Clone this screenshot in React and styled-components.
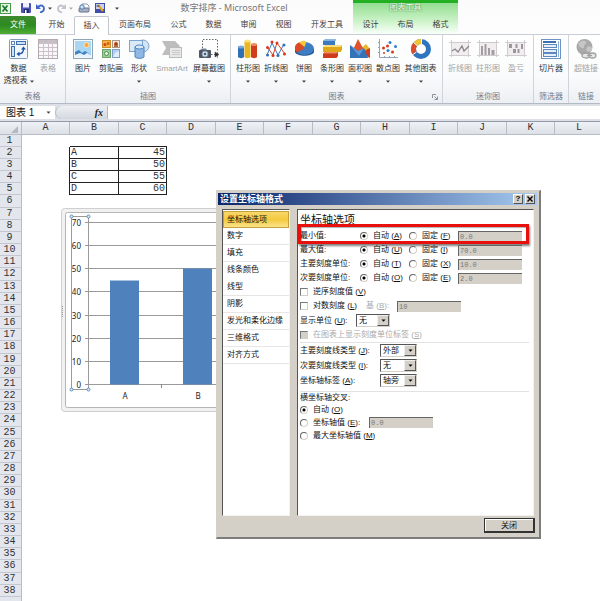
import React from 'react';

import styled, { createGlobalStyle, css } from 'styled-components';

const GlobalStyle = createGlobalStyle`
    * {
        box-sizing: border-box;
    }
    body {
        margin: 0;
        background-color: #fff;
        font-family: 'Liberation Sans', 'Noto Sans CJK SC', sans-serif;
        font-size: 8px;
        line-height: 12px;
        color: #333;
    }
    button, input, select {
        font-family: inherit;
        font-size: inherit;
        line-height: inherit;
        color: inherit;
        margin: 0;
        padding: 0;
    }
    svg {
        display: block;
        flex: none;
    }
`;

const Workbook = styled.div`
    position: relative;
    display: flex;
    flex-direction: column;
    height: 100vh;
    overflow: hidden;
`;

/* Title bar and tabs */

const Header = styled.header`
    display: grid;
    grid-template-columns: 353px auto 1fr;
    grid-template-rows: 16px 18px;
    background: linear-gradient(#fbfbfc, #fdfdfe);
    border-bottom: 1px solid #c9ced6;
    height: 35px;
`;

const TitleBar = styled.div`
    display: flex;
    align-items: center;
`;

const QuickAccess = styled.div`
    display: flex;
    align-items: center;
    gap: 5px;
    width: 115px;
`;

const QuickButton = styled.button`
    display: flex;
    align-items: center;
    gap: 3px;
    border: 0;
    background: none;
`;

const QuickDivider = styled.span`
    width: 1px;
    height: 10px;
    background-color: #a9afb8;
`;

const Title = styled.h1`
    flex: 1;
    margin: 0;
    font-size: 9px;
    font-weight: 400;
    text-align: center;
    color: #777;
    white-space: nowrap;
    font-family: 'Noto Sans', 'Noto Sans CJK SC', sans-serif;
`;

const Tabs = styled.nav`
    display: flex;
    height: 18px;
`;

const MainTabs = styled(Tabs)`
    grid-row: 2;
    grid-column: 1;
`;

const Tab = styled.button`
    width: ${(props) => (props.$wide ? 52 : 35)}px;
    height: 18px;
    border: 0;
    background: none;
    color: #3c3c3c;
    white-space: nowrap;
    ${(props) =>
        props.$active &&
        css`
            height: 19px;
            background-color: #fff;
            border: 1px solid #c3c8d0;
            border-bottom: 0;
            border-radius: 2px 2px 0 0;
        `}
`;

const FileTab = styled(Tab)`
    width: 36px;
    margin-right: 3px;
    color: #fff;
    border-radius: 0 3px 0 0;
    background: linear-gradient(#3d8a2e, #2c8a20 50%, #4fae35);
`;

const ContextTools = styled.div`
    grid-row: 1 / 3;
    grid-column: 2;
    border-top: 3px solid #22b022;
    background: linear-gradient(#93dd91, #c9f2c6 55%, #fafffa);
`;

const ContextLabel = styled.div`
    height: 13px;
    line-height: 9px;
    text-align: center;
    color: #fff;
    text-shadow: 0 0 1px #2f7f2f, 0 0 2px #3f9f3f;
`;

/* Ribbon */

const Ribbon = styled.div`
    display: flex;
    height: 69px;
    background: linear-gradient(#fff, #fafbfc 60%, #eceff3);
    border-bottom: 1px solid #b4bac4;
`;

const Group = styled.section`
    display: flex;
    flex-direction: column;
    justify-content: space-between;
    padding: 3px 3px 0;
    border-right: 1px solid #d0d4da;
    &:last-child {
        border-right: 0;
    }
`;

const GroupButtons = styled.div`
    display: flex;
`;

const GroupFooter = styled.div`
    position: relative;
    text-align: center;
    color: #747c8c;
`;

const Launcher = styled.button`
    position: absolute;
    right: 1px;
    bottom: 3px;
    border: 0;
    background: none;
`;

const Tool = styled.button`
    display: flex;
    flex-direction: column;
    align-items: center;
    width: ${(props) => props.$width || 28}px;
    border: 0;
    background: none;
    white-space: nowrap;
    color: ${(props) => (props.disabled ? '#a3a3a3' : '#333')};
    & svg.picture {
        margin-bottom: 3px;
    }
`;

const ToolCaret = styled.span`
    display: flex;
    align-items: center;
    gap: 2px;
    height: 12px;
`;

/* Formula bar */

const FormulaBar = styled.div`
    display: flex;
    height: 18px;
    padding: 2px 0;
    background-color: #dde1e7;
    border-bottom: 1px solid #949ba6;
`;

const NameBox = styled.label`
    display: flex;
    align-items: center;
    width: 55px;
    padding: 0 4px 0 6px;
    background-color: #fff;
    color: #111;
    & input {
        flex: 1;
        min-width: 0;
        border: 0;
        font-size: 10px;
        background: none;
    }
`;

const FunctionBar = styled.div`
    display: flex;
    align-items: center;
    justify-content: flex-end;
    width: 52px;
    padding-right: 4px;
    border-left: 1px solid #b4bac4;
    border-radius: 7px 0 0 7px;
    background: linear-gradient(#eef0f3, #d3d8e0);
    font: italic bold 10px 'Liberation Serif', serif;
    color: #222;
`;

const FormulaInput = styled.input`
    flex: 1;
    min-width: 0;
    border: 0;
    border-left: 1px solid #b4bac4;
    background-color: #fff;
`;

/* Sheet */

const Sheet = styled.main`
    position: relative;
    flex: 1;
    overflow: hidden;
`;

const Grid = styled.table`
    table-layout: fixed;
    width: 604px;
    min-width: 100%;
    border-collapse: separate;
    border-spacing: 0;
    font-family: 'Liberation Mono', 'Noto Sans CJK SC', monospace;
    font-size: 10px;
    line-height: 10px;
    color: #333;
    & tbody tr {
        height: 12px;
    }
    & tbody tr:nth-child(6n) {
        height: 13px;
    }
`;

const Col = styled.col`
    width: ${(props) => props.$width}px;
`;

const HeadCell = styled.th`
    height: 13px;
    padding: 0;
    font-weight: 400;
    background: linear-gradient(#eef1f5, #dde1e7);
    border-right: 1px solid #b7bdc7;
    border-bottom: 1px solid #b7bdc7;
`;

const RowCell = styled.th`
    padding: 0 2px 0 0;
    font-weight: 400;
    background-color: #e3e7ed;
    border-right: 1px solid #b7bdc7;
    border-bottom: 1px solid #c2c7d0;
`;

const Corner = styled(HeadCell)`
    & svg {
        margin: 2px 3px 0 auto;
    }
`;

const Cell = styled.td`
    padding: 0 1px;
    text-align: ${(props) => (props.$number ? 'right' : 'left')};
    border-right: ${(props) => (props.$right ? '1px solid #222' : '0')};
    border-bottom: ${(props) => (props.$bottom ? '1px solid #222' : '0')};
`;

const ChartObject = styled.figure`
    position: absolute;
    left: 61px;
    top: 86px;
    margin: 0;
`;

/* Dialog */

const Dialog = styled.div`
    position: absolute;
    left: 216px;
    top: 190px;
    width: 325px;
    padding: 2px 2px 4px 1px;
    background-color: #d4d0c8;
    border: 1px solid #d4d0c8;
    border-right: 2px solid #7c7c7c;
    border-bottom: 2px solid #7c7c7c;
    color: #111;
`;

const DialogTitle = styled.div`
    display: flex;
    align-items: center;
    gap: 2px;
    height: 12px;
    padding: 0 2px;
    background: linear-gradient(90deg, #0a246a, #a6caf0);
    & h2 {
        flex: 1;
        margin: 0;
        font-size: 9px;
        font-weight: 700;
        line-height: 12px;
        color: #fff;
    }
`;

const TitleButton = styled.button`
    display: flex;
    align-items: center;
    justify-content: center;
    width: 10px;
    height: 10px;
    border: 1px solid #fff;
    border-right-color: #555;
    border-bottom-color: #555;
    background-color: #d4d0c8;
    font-size: 8px;
    font-weight: 700;
    line-height: 8px;
    color: #000;
`;

const DialogBody = styled.div`
    display: flex;
    gap: 7px;
    padding: 4px 3px 2px 4px;
    min-height: 313px;
`;

const Pane = styled.div`
    background-color: #fff;
    border: 1px solid #f4f2ee;
    border-top-color: #555;
    border-left-color: #555;
`;

const PageList = styled(Pane)`
    width: 68px;
    padding-top: 1px;
`;

const PageButton = styled.button`
    display: block;
    width: 100%;
    height: 17px;
    padding-left: 4px;
    border: 0;
    border-bottom: 1px solid ${(props) => (props.$plain ? '#fff' : '#e6e6e6')};
    background: none;
    text-align: left;
    white-space: nowrap;
    ${(props) =>
        props.$active &&
        css`
            border: 1px solid #c5a13c;
            padding-left: 3px;
            background: linear-gradient(#f8d869, #f5c93f 50%, #fbe389);
        `}
`;

const Options = styled(Pane)`
    flex: 1;
    padding: 0 4px 0 2px;
    & h3 {
        margin: 0;
        height: 19px;
        font-size: 11px;
        font-weight: 400;
        line-height: 20px;
    }
`;

const Row = styled.div`
    position: relative;
    display: flex;
    align-items: center;
    height: ${(props) => props.$height || 14}px;
    white-space: nowrap;
`;

const AxisRow = styled(Row)`
    display: grid;
    grid-template-columns: 60px 49px 49px 64px;
`;

const Highlight = styled.span`
    position: absolute;
    inset: -5px 0 -1px -2px;
    border: 3px solid #e8100c;
    box-shadow: 1px 2px 2px rgba(0, 0, 0, 0.5), inset 1px 1px 1px rgba(0, 0, 0, 0.3);
    pointer-events: none;
`;

const Choice = styled.label`
    display: flex;
    align-items: center;
    gap: 5px;
    color: ${(props) => (props.$disabled ? '#aaa' : 'inherit')};
`;

const Radio = styled.input.attrs({ type: 'radio' })`
    appearance: none;
    width: 8px;
    height: 8px;
    border: 1px solid #666;
    border-right-color: #d4d0c8;
    border-bottom-color: #d4d0c8;
    border-radius: 50%;
    background-color: #fff;
    &:checked {
        background-image: radial-gradient(circle, #000 1px, transparent 2px);
    }
`;

const Checkbox = styled.input.attrs({ type: 'checkbox' })`
    appearance: none;
    width: 8px;
    height: 8px;
    border: 1px solid #777;
    border-right-color: #d4d0c8;
    border-bottom-color: #d4d0c8;
    background-color: ${(props) => (props.disabled ? '#d4d0c8' : '#fff')};
`;

const Field = styled.input`
    width: 64px;
    height: 11px;
    padding-left: 1px;
    border: 0;
    border-top: 1px solid #666;
    border-left: 1px solid #666;
    background-color: #d4d0c8;
    font-family: 'Liberation Mono', monospace;
    font-size: 7px;
    line-height: 10px;
    color: #777;
`;

const FieldLabel = styled.label`
    color: ${(props) => (props.$disabled ? '#aaa' : 'inherit')};
    width: ${(props) => (props.$width ? `${props.$width}px` : 'auto')};
    margin-left: ${(props) => props.$indent || 0}px;
`;

const SelectBox = styled.span`
    display: flex;
    position: relative;
    width: ${(props) => props.$width}px;
    height: 13px;
    border: 1px solid #555;
    border-right-color: #d4d0c8;
    border-bottom-color: #d4d0c8;
    & select {
        appearance: none;
        width: 100%;
        padding-left: 2px;
        border: 0;
        background-color: #fff;
        line-height: 11px;
    }
`;

const SelectArrow = styled.span`
    position: absolute;
    right: 0;
    top: 0;
    bottom: 0;
    display: flex;
    align-items: center;
    justify-content: center;
    width: 12px;
    border: 1px solid #eee;
    border-right-color: #555;
    border-bottom-color: #555;
    background-color: #d4d0c8;
    pointer-events: none;
`;

const Rule = styled.hr`
    width: 100%;
    height: 1px;
    margin: ${(props) => (props.$spaced ? '3px 0 0' : '0')};
    border: 0;
    background-color: #e2e2e2;
`;

const DialogFooter = styled.div`
    display: flex;
    justify-content: flex-end;
    padding-right: 2px;
`;

const CloseButton = styled.button`
    width: 51px;
    height: 15px;
    border: 1px solid #333;
    border-right-width: 2px;
    border-bottom-width: 2px;
    background-color: #d4d0c8;
    box-shadow: inset 1px 1px 0 #fff;
    line-height: 11px;
`;

/* Drawings */

const Caret = ({ color = '#444', size = 4 }) => (
    <svg width={size} height='3' viewBox='0 0 4 3'>
        <path d='M0 0.500h4L2 2.800z' fill={color} />
    </svg>
);

const Picture = ({ children }) => (
    <svg className='picture' width='22' height='22' viewBox='0 0 22 22'>
        {children}
    </svg>
);

const PivotIcon = () => (
    <Picture>
        <rect x='1.500' y='1.500' width='18' height='19' rx='1' fill='#f2f7fc' stroke='#7f9cbd' />
        <rect x='3.500' y='3.500' width='3' height='3' fill='#fff' stroke='#5d86b8' />
        <rect x='8.500' y='3.500' width='9' height='3' fill='#cfe0f2' stroke='#3f70ad' />
        <rect x='3.500' y='8.500' width='3' height='10' fill='#cfe0f2' stroke='#3f70ad' />
        <path d='M10.500 16c3 0 5-1.500 5-5.500' fill='none' stroke='#1f56a5' strokeWidth='1.400' />
        <path d='M13 11.500l2.500-3 2.500 3zM11.500 13.500l-3 2.500 3 2.500z' fill='#1f56a5' />
    </Picture>
);

const TableIcon = () => (
    <Picture>
        <rect x='1.500' y='1.500' width='19' height='19' fill='#faf7f9' stroke='#b3aab0' />
        <path d='M2 2h18v3H2z' fill='#c6bec4' />
        <path d='M2 5.500h18M2 9.500h18M2 13.500h18M2 17.500h18M6.500 2v18M11.500 2v18M15.500 2v18' stroke='#cbc3c9' />
    </Picture>
);

const PhotoIcon = () => (
    <Picture>
        <rect x='1.500' y='1.500' width='19' height='19' fill='#f4f8f9' stroke='#8fa6b4' />
        <rect x='3' y='3' width='16' height='16' fill='#a9d6f3' />
        <circle cx='14.500' cy='7' r='2.500' fill='#f3a84c' stroke='#fbe3b6' />
        <path d='M3 14l4-2 3 3 3-2 6 4v2H3z' fill='#3d83c4' />
        <path d='M3 17l5-2 4 2 3-2 4 2v2H3z' fill='#e6f2fb' />
    </Picture>
);

const ClipArtIcon = () => (
    <Picture>
        <rect x='2.500' y='2.500' width='8' height='7' fill='#f4b642' stroke='#ce8a28' />
        <circle cx='5' cy='6.500' r='1.500' fill='#d23f1c' />
        <path d='M7 4h2.500v3H7z' fill='#e2651f' />
        <rect x='12.500' y='2.500' width='7' height='7' fill='#f3ebe0' stroke='#a99a8b' />
        <path d='M14 9V5l2-1.500L18 5v4z' fill='#c6682e' />
        <circle cx='16' cy='6' r='1' fill='#6b3a22' />
        <rect x='2.500' y='11.500' width='8' height='8' fill='#9bcc97' stroke='#6ea36a' />
        <circle cx='6.500' cy='15.500' r='2' fill='#e7f3c8' stroke='#488f67' />
        <rect x='12.500' y='11.500' width='7' height='8' fill='#b4d0f0' stroke='#7d9fcb' />
        <path d='M13 19l2-4 4-2v6z' fill='#e1edfa' />
    </Picture>
);

const ShapesIcon = () => (
    <Picture>
        <circle cx='15' cy='8' r='6' fill='#d3e4f4' stroke='#7aa3cd' />
        <rect x='1.500' y='2.500' width='13' height='11' fill='#dceaf8' stroke='#7aa3cd' />
        <path d='M7 9v10c1.500 1.800 7.500 1.800 9 0V9z' fill='#8fb9e4' stroke='#4c84bf' />
        <ellipse cx='11.500' cy='9' rx='4.500' ry='2' fill='#d8e8f8' stroke='#4c84bf' />
    </Picture>
);

const SmartArtIcon = () => (
    <Picture>
        <path d='M1 3h13l5 5-2 3H9v6H1l4-7z' fill='#bdbdbd' />
        <rect x='8.500' y='9.500' width='12' height='10' fill='#e8e8e8' stroke='#bbb' />
        <path d='M11 12.500h8M11 14.500h8M11 16.500h8' stroke='#c9c9c9' />
    </Picture>
);

const ScreenshotIcon = () => (
    <Picture>
        <path d='M4.500 10V1.500h15v12M13 16.500h4' fill='none' stroke='#666' strokeDasharray='1.500 1.500' />
        <path d='M17 14l4 2.500-4 2.500zM19.500 14v6' stroke='#333' fill='#333' strokeWidth='0.500' />
        <rect x='1' y='12' width='12' height='8' rx='1' fill='#4d5660' />
        <path d='M2 12l2-1.500h4L9 12z' fill='#7a8490' />
        <circle cx='7' cy='16' r='3' fill='#d9e5f0' stroke='#8797a8' />
        <circle cx='7' cy='16' r='1.300' fill='#41607f' />
    </Picture>
);

const ColumnIcon = () => (
    <Picture>
        <path d='M1 9v10c1 1.500 5 1.500 6 0V9z' fill='#2f6fb5' />
        <ellipse cx='4' cy='9' rx='3' ry='1.500' fill='#77a8dc' />
        <path d='M7.500 3v16c1 1.500 5 1.500 6 0V3z' fill='#e9b521' />
        <ellipse cx='10.500' cy='3' rx='3' ry='1.500' fill='#fbe07c' />
        <path d='M14 6.500V19c1 1.500 5 1.500 6 0V6.500z' fill='#cf3d1c' />
        <ellipse cx='17' cy='6.500' rx='3' ry='1.500' fill='#f08862' />
    </Picture>
);

const LineIcon = () => (
    <Picture>
        <path d='M2 17L7 5l6 12 6-11' fill='none' stroke='#3978bd' />
        <path d='M2 9l6 8L12 5l8 11' fill='none' stroke='#d9482c' />
        <g fill='#2f6fb5'>
            <circle cx='2.500' cy='17' r='1.500' />
            <circle cx='13' cy='17.500' r='1.500' />
            <circle cx='19' cy='7' r='1.500' />
        </g>
        <g fill='#d9381c'>
            <circle cx='2.500' cy='9.500' r='1.500' />
            <circle cx='7' cy='4' r='1.500' />
            <circle cx='12' cy='5' r='1.500' />
            <circle cx='8' cy='17.500' r='1.500' />
            <circle cx='19.500' cy='16' r='1.500' />
        </g>
    </Picture>
);

const PieIcon = () => (
    <Picture>
        <path d='M2 11v3c2 5 17 5 19 0v-3z' fill='#1f5795' />
        <ellipse cx='11.500' cy='10.500' rx='9.500' ry='6.500' fill='#3c7dc4' />
        <path d='M11.500 10.500L4 14.500C-1 9 4 4 8 4z' fill='#db4a25' />
        <path d='M11.500 9L6 4.500c3-2 6-2 7.500-1z' fill='#f3c93b' />
    </Picture>
);

const BarIcon = () => (
    <Picture>
        <path d='M2 3l2-1.500h11L14 3v4H2z' fill='#3a78c0' />
        <path d='M2 3l2-1.500h11L14 3z' fill='#7fb0e2' />
        <path d='M2 9l2-1.500h17V12l-1.500 2H2z' fill='#e0a819' />
        <path d='M2 9l2-1.500h17L19.500 9z' fill='#fbe07c' />
        <path d='M2 15.500L4 14h13v4l-1.500 2H2z' fill='#cd3b1b' />
        <path d='M2 15.500L4 14h13l-1.500 1.500z' fill='#f08862' />
    </Picture>
);

const AreaIcon = () => (
    <Picture>
        <path d='M10 12l7-6 4 5v7H9z' fill='#eab826' />
        <path d='M3 14L9 1l6 11-4 4z' fill='#e0522b' />
        <path d='M15 13l6-3v10l-4-2z' fill='#cf3d1c' />
        <path d='M1 7l8 6 6-3 4 10H1z' fill='#3472b8' />
        <path d='M1 7l8 6 6-3-5 8z' fill='#5b95d5' />
    </Picture>
);

const ScatterIcon = () => (
    <Picture>
        <path d='M2.500 1v18.500H21M1 4.500h2M1 9.500h2M1 14.500h2M7.500 18v2M12.500 18v2M17.500 18v2' fill='none' stroke='#8fa3ba' />
        <g fill='#d9381c'>
            <circle cx='6.500' cy='10' r='1.500' />
            <circle cx='10.500' cy='8' r='1.500' />
            <circle cx='15.500' cy='14' r='1.500' />
            <circle cx='7' cy='15' r='1' />
        </g>
        <g fill='#2f7fd0'>
            <circle cx='13' cy='4.500' r='1.500' />
            <circle cx='18.500' cy='8.500' r='1.500' />
            <circle cx='11' cy='12.500' r='1.500' />
        </g>
    </Picture>
);

const DonutIcon = () => (
    <Picture>
        <circle cx='11' cy='11' r='7.500' fill='none' stroke='#2f74be' strokeWidth='5' />
        <path d='M4.500 14.700A7.500 7.500 0 0 1 5.500 6' fill='none' stroke='#dc4c2a' strokeWidth='5' />
        <path d='M5.500 6A7.500 7.500 0 0 1 11.500 3.500' fill='none' stroke='#f1c232' strokeWidth='5' />
        <path d='M3 16.500l3.500-2.500M3.500 4.500l4 3.500M11.500 1v5' stroke='#fff' />
    </Picture>
);

const SparkFrame = ({ children }) => (
    <Picture>
        <rect x='2' y='4' width='18' height='13' fill='#f1eef0' />
        <path d='M0 4.500h22M0 17.500h22M2.500 2v17M19.500 2v17' stroke='#d0c9ce' />
        {children}
    </Picture>
);

const SparkLineIcon = () => (
    <SparkFrame>
        <path d='M3 13l3-2 3 3 4-6 2 5 5-5' fill='none' stroke='#8d858b' strokeWidth='1.300' />
    </SparkFrame>
);

const SparkColumnIcon = () => (
    <SparkFrame>
        <path d='M4 8h2v9H4zM7.500 6h2v11h-2zM11 10h2v7h-2zM14.500 12h3v5h-3z' fill='#a59da3' />
    </SparkFrame>
);

const WinLossIcon = () => (
    <SparkFrame>
        <path d='M4 6h3v4H4zM8 11h3v4H8zM10.500 6h2v4h-2zM12.500 11h2v4h-2zM16 6h2v5h-2z' fill='#9d959b' />
    </SparkFrame>
);

const SlicerIcon = () => (
    <Picture>
        <rect x='1.500' y='1.500' width='19' height='19' fill='#fff' stroke='#6d93c4' />
        <path d='M3 4h13' stroke='#3d70b2' strokeWidth='2' />
        <path d='M18.500 3v16' stroke='#8fb0d8' />
        <g fill='#e6effa' stroke='#5c88be'>
            <rect x='3.500' y='6.500' width='13' height='3' />
            <rect x='3.500' y='11.500' width='13' height='3' />
            <rect x='3.500' y='15.500' width='13' height='3' />
        </g>
    </Picture>
);

const LinkIcon = () => (
    <Picture>
        <circle cx='9.500' cy='9' r='8' fill='#a9a9a9' />
        <path d='M3 6c3-4 7-4 8-2s-2 2-2 5-4 1-6-3zM12 9c3-2 5 0 5 2s-3 4-5 2 0-2 0-4z' fill='#c6c6c6' />
        <g fill='none' stroke='#a0a0a0' strokeWidth='1.300'>
            <ellipse cx='11' cy='17.500' rx='4' ry='2.500' fill='#e6e6e6' />
            <ellipse cx='17.500' cy='17.500' rx='3.500' ry='2.500' fill='#e6e6e6' />
            <path d='M12 17.500h5' />
        </g>
    </Picture>
);

const ExcelLogo = () => (
    <svg width='11' height='11' viewBox='0 0 11 11'>
        <rect x='0.500' y='0.500' width='10' height='10' fill='#e9f4e8' stroke='#4b9b4d' />
        <path d='M2.500 2.500l5 6M7.500 2.500l-5 6' stroke='#1d7a2d' strokeWidth='1.800' />
    </svg>
);

const SaveIcon = () => (
    <svg width='10' height='10' viewBox='0 0 10 10'>
        <rect width='10' height='10' rx='1' fill='#4a53b5' />
        <path d='M2 0h6v4.500H2z' fill='#eef0fb' />
        <path d='M3 6h5v4H3z' fill='#252c74' />
        <path d='M4 7h1.500v3H4z' fill='#fff' />
    </svg>
);

const UndoIcon = ({ color, flip }) => (
    <svg width='9' height='10' viewBox='0 0 9 10'>
        <g transform={flip ? 'translate(9 0) scale(-1 1)' : undefined}>
            <path d='M2 4c3-3 6-1 6 1.500S6 9 4 9.500' fill='none' stroke={color} strokeWidth='1.800' />
            <path d='M0 1v5h5z' fill={color} />
        </g>
    </svg>
);

const PrintIcon = () => (
    <svg width='12' height='10' viewBox='0 0 12 10'>
        <path d='M4 1h5l2 2v3H4z' fill='#fff' stroke='#8a9bb5' />
        <rect x='1' y='5' width='10' height='4' rx='1' fill='#a5b1c3' stroke='#66758c' />
        <circle cx='4' cy='4' r='2.200' fill='#cfe3f7' stroke='#4d77aa' />
    </svg>
);

const EditIcon = () => (
    <svg width='10' height='10' viewBox='0 0 10 10'>
        <rect x='0.500' y='0.500' width='9' height='9' fill='#c5d2f0' stroke='#3f4fa8' />
        <path d='M0.500 6h9v3.500h-9z' fill='#3f4fa8' />
        <path d='M3 2l5 6' stroke='#e8a52e' strokeWidth='2' />
        <path d='M1.500 3h3' stroke='#26306f' />
    </svg>
);

const AXIS_STEPS = [0, 10, 20, 30, 40, 50, 60, 70];
const BARS = [
    { name: 'A', value: 45, x: 110 },
    { name: 'B', value: 50, x: 183 },
];
const axisY = (value) => 384.5 - Math.round((value * 162) / 70);

const Chart = () => (
    <ChartObject>
        <svg
            width='220'
            height='205'
            viewBox='61 208 220 205'
            fontFamily="'Noto Sans', sans-serif"
            fontSize='8'
            fill='#222'
        >
            <rect x='61.500' y='208.500' width='300' height='203' rx='3' fill='#f1f1f1' stroke='#cfcfcf' />
            <rect x='65.500' y='212.500' width='296' height='195' rx='2' fill='#fff' stroke='#b5b5b5' />
            <path d='M62.500 306v12' stroke='#999' strokeDasharray='1 1' />
            {AXIS_STEPS.map((step) => (
                <g key={step}>
                    <path d={`M85 ${axisY(step)}H281`} stroke='#9a9a9a' />
                    <text x='81' y={axisY(step) + 3} textAnchor='end'>
                        {step}
                    </text>
                </g>
            ))}
            {BARS.map((bar) => (
                <g key={bar.name}>
                    <rect
                        x={bar.x}
                        y={axisY(bar.value)}
                        width='29'
                        height={384.5 - axisY(bar.value)}
                        fill='#4f81bd'
                    />
                    <text x={bar.x + 15} y='399' textAnchor='middle'>
                        {bar.name}
                    </text>
                </g>
            ))}
            <path d='M88.500 222v166M161.500 384v4' stroke='#858585' />
            <rect x='71.500' y='216.500' width='17' height='173' fill='none' stroke='#9a9a9a' />
            {[
                [71.5, 216.5],
                [88.5, 216.5],
                [71.5, 389.5],
                [88.5, 389.5],
            ].map(([x, y]) => (
                <circle key={`${x}-${y}`} cx={x} cy={y} r='1.500' fill='#e4eff8' stroke='#5a8bb5' />
            ))}
        </svg>
    </ChartObject>
);

/* Parts */

const RIBBON = [
    {
        title: '表格',
        tools: [
            { label: '数据', second: '透视表', icon: PivotIcon, width: 31 },
            { label: '表格', icon: TableIcon, disabled: true },
        ],
    },
    {
        title: '插图',
        tools: [
            { label: '图片', icon: PhotoIcon },
            { label: '剪贴画', icon: ClipArtIcon },
            { label: '形状', icon: ShapesIcon, caret: true },
            { label: 'SmartArt', icon: SmartArtIcon, disabled: true, width: 38 },
            { label: '屏幕截图', icon: ScreenshotIcon, caret: true, width: 36 },
        ],
    },
    {
        title: '图表',
        launcher: true,
        tools: [
            { label: '柱形图', icon: ColumnIcon, caret: true },
            { label: '折线图', icon: LineIcon, caret: true },
            { label: '饼图', icon: PieIcon, caret: true },
            { label: '条形图', icon: BarIcon, caret: true },
            { label: '面积图', icon: AreaIcon, caret: true },
            { label: '散点图', icon: ScatterIcon, caret: true },
            { label: '其他图表', icon: DonutIcon, caret: true, width: 37 },
        ],
    },
    {
        title: '迷你图',
        tools: [
            { label: '折线图', icon: SparkLineIcon, disabled: true },
            { label: '柱形图', icon: SparkColumnIcon, disabled: true },
            { label: '盈亏', icon: WinLossIcon, disabled: true },
        ],
    },
    { title: '筛选器', tools: [{ label: '切片器', icon: SlicerIcon }] },
    { title: '链接', tools: [{ label: '超链接', icon: LinkIcon, disabled: true }] },
];

function RibbonGroup({ group }) {
    return (
        <Group>
            <GroupButtons>
                {group.tools.map(({ label, second, icon: Icon, caret, disabled, width }) => (
                    <Tool key={label} $width={width} disabled={disabled}>
                        <Icon />
                        {label}
                        {(second || caret) && (
                            <ToolCaret>
                                {second}
                                <Caret />
                            </ToolCaret>
                        )}
                    </Tool>
                ))}
            </GroupButtons>
            <GroupFooter>
                {group.title}
                {group.launcher && (
                    <Launcher aria-label='图表'>
                        <svg width='6' height='6' viewBox='0 0 6 6'>
                            <path d='M0.500 4V0.500H4M2.500 2.500L5 5M5.500 2.500v3h-3' fill='none' stroke='#8b93a1' />
                        </svg>
                    </Launcher>
                )}
            </GroupFooter>
        </Group>
    );
}

const COLUMNS = 'ABCDEFGHIJKL'.split('');
const ROWS = Array.from({ length: 38 }, (_, i) => i + 1);
const DATA = { 2: ['A', 45], 3: ['B', 50], 4: ['C', 55], 5: ['D', 60] };

function SheetGrid() {
    return (
        <Grid>
            <colgroup>
                <Col $width={22} />
                {COLUMNS.map((name, i) => (
                    <Col key={name} $width={i % 2 ? 49 : 48} />
                ))}
            </colgroup>
            <thead>
                <tr>
                    <Corner>
                        <svg width='7' height='7' viewBox='0 0 7 7'>
                            <path d='M7 0v7H0z' fill='#b4bac4' />
                        </svg>
                    </Corner>
                    {COLUMNS.map((name) => (
                        <HeadCell key={name}>{name}</HeadCell>
                    ))}
                </tr>
            </thead>
            <tbody>
                {ROWS.map((row) => {
                    const values = DATA[row];
                    const framed = Boolean(values) || row === 1;
                    return (
                        <tr key={row}>
                            <RowCell>{row}</RowCell>
                            <Cell $right={values} />
                            <Cell $right={values} $bottom={framed}>
                                {values && values[0]}
                            </Cell>
                            <Cell $number $right={values} $bottom={framed}>
                                {values && values[1]}
                            </Cell>
                        </tr>
                    );
                })}
                <tr>
                    <RowCell />
                </tr>
            </tbody>
        </Grid>
    );
}

const PAGES = ['坐标轴选项', '数字', '填充', '线条颜色', '线型', '阴影', '发光和柔化边缘', '三维格式', '对齐方式'];

const AXIS_ROWS = [
    { id: 'min', label: '最小值:', auto: 'A', fixed: 'F', value: '0.0', marked: true },
    { id: 'max', label: '最大值:', auto: 'U', fixed: 'I', value: '70.0' },
    { id: 'major', label: '主要刻度单位:', auto: 'T', fixed: 'X', value: '10.0' },
    { id: 'minor', label: '次要刻度单位:', auto: 'O', fixed: 'E', value: '2.0' },
];

const TYPE_ROWS = [
    { id: 'major-type', label: '主要刻度线类型', letter: 'J', value: '外部' },
    { id: 'minor-type', label: '次要刻度线类型', letter: 'I', value: '无' },
    { id: 'axis-label', label: '坐标轴标签', letter: 'A', value: '轴旁' },
];

const Key = ({ children }) => (
    <>
        {' ('}
        <u>{children}</u>)
    </>
);

const Dropdown = ({ id, value, width }) => (
    <SelectBox $width={width}>
        <select id={id} defaultValue={value}>
            <option>{value}</option>
        </select>
        <SelectArrow>
            <Caret color='#000' size={5} />
        </SelectArrow>
    </SelectBox>
);

function AxisOptions() {
    return (
        <Options>
            <h3>坐标轴选项</h3>
            {AXIS_ROWS.map((row) => (
                <AxisRow key={row.id}>
                    <span>{row.label}</span>
                    <Choice>
                        <Radio name={row.id} defaultChecked />
                        <span>
                            自动
                            <Key>{row.auto}</Key>
                        </span>
                    </Choice>
                    <Choice>
                        <Radio name={row.id} />
                        <span>
                            固定
                            <Key>{row.fixed}</Key>
                        </span>
                    </Choice>
                    <Field aria-label={row.label} defaultValue={row.value} disabled />
                    {row.marked && <Highlight />}
                </AxisRow>
            ))}
            <Row>
                <Choice>
                    <Checkbox />
                    <span>
                        逆序刻度值
                        <Key>V</Key>
                    </span>
                </Choice>
            </Row>
            <Row>
                <Choice>
                    <Checkbox />
                    <span>
                        对数刻度
                        <Key>L</Key>
                    </span>
                </Choice>
                <FieldLabel htmlFor='log-base' $disabled $indent={9} $width={31}>
                    基
                    <Key>B</Key>:
                </FieldLabel>
                <Field id='log-base' defaultValue='10' disabled />
            </Row>
            <Row $height={15}>
                <FieldLabel htmlFor='unit' $width={56}>
                    显示单位
                    <Key>U</Key>:
                </FieldLabel>
                <Dropdown id='unit' value='无' width={34} />
            </Row>
            <Row>
                <Choice $disabled>
                    <Checkbox disabled />
                    <span>
                        在图表上显示刻度单位标签
                        <Key>S</Key>
                    </span>
                </Choice>
            </Row>
            <Rule />
            {TYPE_ROWS.map((row) => (
                <Row key={row.id} $height={15}>
                    <FieldLabel htmlFor={row.id} $width={80}>
                        {row.label}
                        <Key>{row.letter}</Key>:
                    </FieldLabel>
                    <Dropdown id={row.id} value={row.value} width={37} />
                </Row>
            ))}
            <Rule $spaced />
            <Row $height={11}>横坐标轴交叉:</Row>
            <Row $height={13}>
                <Choice>
                    <Radio name='cross' defaultChecked />
                    <span>
                        自动
                        <Key>O</Key>
                    </span>
                </Choice>
            </Row>
            <Row $height={13}>
                <Choice>
                    <Radio name='cross' />
                    <FieldLabel as='span' $width={56}>
                        坐标轴值
                        <Key>E</Key>:
                    </FieldLabel>
                </Choice>
                <Field aria-label='坐标轴值' defaultValue='0.0' disabled />
            </Row>
            <Row $height={13}>
                <Choice>
                    <Radio name='cross' />
                    <span>
                        最大坐标轴值
                        <Key>M</Key>
                    </span>
                </Choice>
            </Row>
        </Options>
    );
}

function FormatDialog() {
    return (
        <Dialog role='dialog' aria-labelledby='dialog-title'>
            <DialogTitle>
                <h2 id='dialog-title'>设置坐标轴格式</h2>
                <TitleButton>?</TitleButton>
                <TitleButton aria-label='关闭'>
                    <svg width='6' height='6' viewBox='0 0 6 6'>
                        <path d='M0.500 0.500l5 5M5.500 0.500l-5 5' stroke='#000' strokeWidth='1.400' />
                    </svg>
                </TitleButton>
            </DialogTitle>
            <DialogBody>
                <PageList>
                    {PAGES.map((page, i) => (
                        <PageButton key={page} $active={i === 0} $plain={page === '线条颜色'}>
                            {page}
                        </PageButton>
                    ))}
                </PageList>
                <AxisOptions />
            </DialogBody>
            <DialogFooter>
                <CloseButton>关闭</CloseButton>
            </DialogFooter>
        </Dialog>
    );
}

function App() {
    return (
        <Workbook>
            <GlobalStyle />
            <Header>
                <TitleBar>
                    <QuickAccess>
                        <ExcelLogo />
                        <QuickDivider />
                        <QuickButton aria-label='保存'>
                            <SaveIcon />
                        </QuickButton>
                        <QuickButton aria-label='撤消'>
                            <UndoIcon color='#3c66c4' />
                            <Caret />
                        </QuickButton>
                        <QuickButton aria-label='恢复' disabled>
                            <UndoIcon color='#bfc3ca' flip />
                            <Caret color='#aaa' />
                        </QuickButton>
                        <QuickButton aria-label='打印预览'>
                            <PrintIcon />
                        </QuickButton>
                        <QuickButton aria-label='编辑'>
                            <EditIcon />
                        </QuickButton>
                        <QuickDivider />
                        <Caret />
                    </QuickAccess>
                    <Title>数字排序 - Microsoft Excel</Title>
                </TitleBar>
                <MainTabs>
                    <FileTab>文件</FileTab>
                    <Tab>开始</Tab>
                    <Tab $active>插入</Tab>
                    <Tab $wide>页面布局</Tab>
                    <Tab>公式</Tab>
                    <Tab>数据</Tab>
                    <Tab>审阅</Tab>
                    <Tab>视图</Tab>
                    <Tab $wide>开发工具</Tab>
                </MainTabs>
                <ContextTools>
                    <ContextLabel>图表工具</ContextLabel>
                    <Tabs>
                        <Tab>设计</Tab>
                        <Tab>布局</Tab>
                        <Tab>格式</Tab>
                    </Tabs>
                </ContextTools>
            </Header>
            <Ribbon>
                {RIBBON.map((group) => (
                    <RibbonGroup key={group.title} group={group} />
                ))}
            </Ribbon>
            <FormulaBar>
                <NameBox>
                    <input aria-label='名称框' defaultValue='图表 1' />
                    <Caret size={5} />
                </NameBox>
                <FunctionBar>fx</FunctionBar>
                <FormulaInput aria-label='编辑栏' />
            </FormulaBar>
            <Sheet>
                <SheetGrid />
                <Chart />
            </Sheet>
            <FormatDialog />
        </Workbook>
    );
}

export default App;
